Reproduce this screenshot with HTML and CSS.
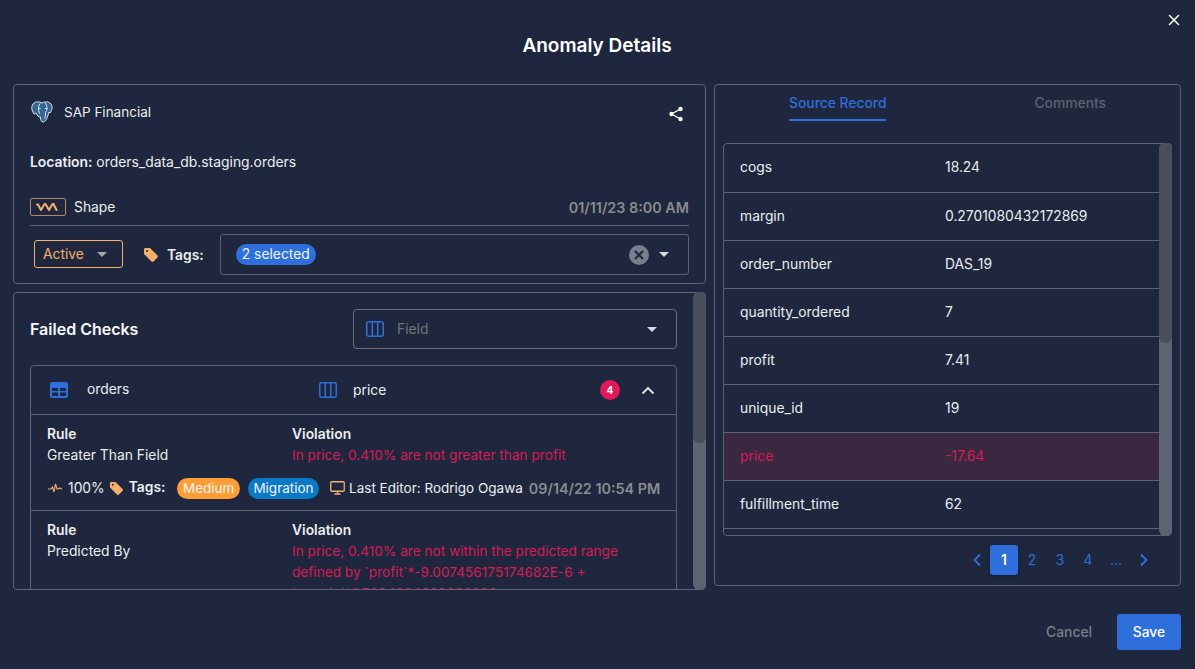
FILE: index.html
```html
<!DOCTYPE html>
<html lang="en">
<head>
    <meta charset="UTF-8">
    <meta name="viewport" content="width=device-width, initial-scale=1.0">
    <title>Anomaly Details</title>
    <link rel="stylesheet" href="styles.css">
</head>
<body>
    <div class="modal">
        <button class="close-btn" aria-label="Close">
            <svg width="12" height="12" viewBox="0 0 12 12"><path d="M1.5 1.5l9 9M10.5 1.5l-9 9" stroke="#fff" stroke-width="1.5" stroke-linecap="round"/></svg>
        </button>
        <h1 class="title">Anomaly Details</h1>

        <div class="columns">
            <div class="left-col">
                <section class="card summary">
                    <div class="source-row">
                        <div class="source">
                            <svg class="pg-logo" width="24" height="24" viewBox="0 0 24 24">
                                <path d="M3 4C6 1 9 1.500 12 3c3-1.500 6-2 9 1 2 3 1 6-1 9l-1-1c-1 3-2 9-5.500 10-2.500 0-3-2-3-5-2 .5-3.500-2-4.500-4l-2 1C1.500 10 1 7 3 4z" fill="#336791" stroke="#dfe6ee" stroke-width="1"/>
                                <path d="M10 3.500C8 6 8 10 9.500 13.500M15 3c2.500 2.500 2.500 7 .5 9.500 0 2 0 4-1 6M8 8.500h2.500M15 8.500h2.500" fill="none" stroke="#dfe6ee" stroke-width="1"/>
                            </svg>
                            <span>SAP Financial</span>
                        </div>
                        <svg class="share" width="16" height="16" viewBox="0 0 16 16">
                            <path d="M12.500 3L3.500 8l9 5" fill="none" stroke="#fff" stroke-width="1.300"/>
                            <circle cx="12.500" cy="3" r="2.200" fill="#fff"/><circle cx="3.500" cy="8" r="2.200" fill="#fff"/><circle cx="12.500" cy="13" r="2.200" fill="#fff"/>
                        </svg>
                    </div>
                    <p class="location"><b>Location:</b> orders_data_db.staging.orders</p>
                    <div class="shape-row">
                        <div class="shape">
                            <span class="shape-icon">
                                <svg width="26" height="10" viewBox="0 0 26 10"><path d="M2 2.500h1l3 5.500 3.500-6h1L14 8l3.500-6h1l3 6" fill="none" stroke="#f5b06b" stroke-width="2" stroke-linejoin="round" stroke-linecap="round"/></svg>
                            </span>
                            <span>Shape</span>
                        </div>
                        <span class="timestamp">01/11/23 8:00 AM</span>
                    </div>
                    <div class="status-row">
                        <div class="status-select">
                            <span>Active</span>
                            <i class="caret caret-grey"></i>
                        </div>
                        <svg class="tag-icon" width="16" height="16" viewBox="0 0 16 16"><path d="M1 2.500C1 1.700 1.700 1 2.500 1H7l7.500 7.500c.6.600.6 1.400 0 2l-4 4c-.6.600-1.400.600-2 0L1 7z" fill="#f5b06b"/><circle cx="4" cy="4" r="1" fill="#1e273d"/></svg>
                        <b class="tags-label">Tags:</b>
                        <div class="tags-select">
                            <span class="chip-selected">2 selected</span>
                            <div class="tags-actions">
                                <svg width="20" height="20" viewBox="0 0 20 20"><circle cx="10" cy="10" r="10" fill="#787e8d"/><path d="M6 6l8 8M14 6l-8 8" stroke="#1e273d" stroke-width="2"/></svg>
                                <i class="caret"></i>
                            </div>
                        </div>
                    </div>
                </section>

                <section class="card checks">
                    <div class="checks-scroll">
                        <div class="checks-head">
                            <h2>Failed Checks</h2>
                            <div class="field-select">
                                <svg width="18" height="16" viewBox="0 0 18 16"><rect x=".75" y=".75" width="16.500" height="14.500" rx="2" fill="none" stroke="#2f6fdb" stroke-width="1.500"/><path d="M6.300 1v14M11.700 1v14" stroke="#2f6fdb" stroke-width="1.500"/></svg>
                                <span>Field</span>
                                <i class="caret"></i>
                            </div>
                        </div>
                        <div class="check-group">
                            <div class="group-head">
                                <div class="group-table">
                                    <svg width="18" height="16" viewBox="0 0 18 16"><rect x="0" y="0" width="18" height="16" rx="2" fill="#2f6fdb"/><path d="M2 6h6v3H2zM10 6h6v3h-6zM2 10.500h6V14H2zM10 10.500h6V14h-6z" fill="#1e273d"/></svg>
                                    <span>orders</span>
                                </div>
                                <div class="group-field">
                                    <svg width="18" height="16" viewBox="0 0 18 16"><rect x=".75" y=".75" width="16.500" height="14.500" rx="2" fill="none" stroke="#2f6fdb" stroke-width="1.500"/><path d="M6.300 1v14M11.700 1v14" stroke="#2f6fdb" stroke-width="1.500"/></svg>
                                    <span>price</span>
                                </div>
                                <span class="count-badge">4</span>
                                <svg class="chevron" width="14" height="9" viewBox="0 0 14 9"><path d="M1.500 7.500L7 2l5.500 5.500" fill="none" stroke="#e4e6ea" stroke-width="1.800"/></svg>
                            </div>
                            <div class="rule">
                                <div class="rule-cols">
                                    <div class="rule-name"><b>Rule</b><span>Greater Than Field</span></div>
                                    <div class="rule-violation"><b>Violation</b><span class="danger">In price, 0.410% are not greater than profit</span></div>
                                </div>
                                <div class="rule-meta">
                                    <svg class="pulse" width="14" height="10" viewBox="0 0 14 10"><path d="M0 6h3l1.500-2L6 9l1.500-8L9 6h1.500l1-1L14 6" fill="none" stroke="#f5b06b" stroke-width="1.100"/></svg>
                                    <span class="pct">100%</span>
                                    <svg class="meta-tag" width="15" height="15" viewBox="0 0 16 16"><path d="M1 2.500C1 1.700 1.700 1 2.500 1H7l7.500 7.500c.6.600.6 1.400 0 2l-4 4c-.6.600-1.400.600-2 0L1 7z" fill="#f5b06b"/><circle cx="4" cy="4" r="1" fill="#1e273d"/></svg>
                                    <b class="meta-tags">Tags:</b>
                                    <span class="pill pill-orange">Medium</span>
                                    <span class="pill pill-blue">Migration</span>
                                    <svg class="monitor" width="15" height="14" viewBox="0 0 15 14"><rect x=".75" y=".75" width="13.500" height="9.500" rx="1" fill="none" stroke="#f5b06b" stroke-width="1.300"/><path d="M7.500 10.500v2M4.500 13h6" stroke="#f5b06b" stroke-width="1.300"/></svg>
                                    <span class="editor">Last Editor: Rodrigo Ogawa</span>
                                    <span class="timestamp">09/14/22 10:54 PM</span>
                                </div>
                            </div>
                            <div class="rule rule-last">
                                <div class="rule-cols">
                                    <div class="rule-name"><b>Rule</b><span>Predicted By</span></div>
                                    <div class="rule-violation"><b>Violation</b><span class="danger">In price, 0.410% are not within the predicted range defined by `profit`*-9.007456175174682E-6 + `margin`*1.5694984669632698</span></div>
                                </div>
                            </div>
                        </div>
                    </div>
                    <div class="scrollbar"><div class="scrollbar-thumb thumb-left"></div></div>
                </section>
            </div>

            <section class="card record">
                <div class="tabs">
                    <span class="tab tab-active">Source Record</span>
                    <span class="tab">Comments</span>
                </div>
                <div class="record-table">
                    <div class="record-row"><span class="key">cogs</span><span>18.24</span></div>
                    <div class="record-row"><span class="key">margin</span><span>0.2701080432172869</span></div>
                    <div class="record-row"><span class="key">order_number</span><span>DAS_19</span></div>
                    <div class="record-row"><span class="key">quantity_ordered</span><span>7</span></div>
                    <div class="record-row"><span class="key">profit</span><span>7.41</span></div>
                    <div class="record-row"><span class="key">unique_id</span><span>19</span></div>
                    <div class="record-row row-danger"><span class="key">price</span><span>-17.64</span></div>
                    <div class="record-row"><span class="key">fulfillment_time</span><span>62</span></div>
                    <div class="scrollbar"><div class="scrollbar-thumb thumb-right"></div></div>
                </div>
                <div class="pagination">
                    <svg width="10" height="14" viewBox="0 0 10 14"><path d="M8 1.500L2.500 7 8 12.500" fill="none" stroke="#2f6fdb" stroke-width="1.800"/></svg>
                    <span class="page page-active">1</span>
                    <span class="page">2</span>
                    <span class="page">3</span>
                    <span class="page">4</span>
                    <span class="page">...</span>
                    <svg width="10" height="14" viewBox="0 0 10 14"><path d="M2 1.500L7.500 7 2 12.500" fill="none" stroke="#2f6fdb" stroke-width="1.800"/></svg>
                </div>
            </section>
        </div>

        <div class="footer">
            <button class="btn-cancel">Cancel</button>
            <button class="btn-save">Save</button>
        </div>
    </div>
</body>
</html>
```

FILE: styles.css
```css
* {
    box-sizing: border-box;
}
body {
    margin: 0;
    background-color: #1e273d;
    color: #eceef1;
    font-family: Inter, "Liberation Sans", sans-serif;
    font-size: 13.85px;
    overflow: hidden;
}
.modal {
    position: relative;
    width: 1195px;
    height: 669px;
    padding: 0 14px 0 13px;
}
.close-btn {
    position: absolute;
    top: 14px;
    right: 15px;
    padding: 0;
    width: 12px;
    height: 12px;
    display: flex;
    background: none;
    border: none;
}
.title {
    margin: 0;
    padding-top: 34px;
    height: 84px;
    font-size: 19px;
    line-height: 24px;
    font-weight: 600;
    text-align: center;
    color: #fff;
}
.columns {
    display: flex;
    gap: 8px;
}
.left-col {
    width: 693px;
    display: flex;
    flex-direction: column;
    gap: 8px;
}
.card {
    border: 1px solid #5c6373;
    border-radius: 4px;
}
.caret {
    display: inline-block;
    width: 0;
    height: 0;
    border-left: 5px solid transparent;
    border-right: 5px solid transparent;
    border-top: 5px solid #d6d8dc;
}
.caret-grey {
    border-top-color: #a5a7aa;
}
svg {
    flex-shrink: 0;
}

/* summary card */
.summary {
    height: 200px;
    padding: 15px 16px 0;
}
.source-row {
    display: flex;
    justify-content: space-between;
    align-items: center;
    height: 24px;
}
.source {
    display: flex;
    align-items: center;
    gap: 10px;
}
.source span {
    font-size: 13.5px;
}
.share {
    margin: 3px 5px 0 0;
}
.location {
    margin: 28px 0 0;
    line-height: 20px;
    font-size: 13.9px;
}
.location b {
    font-weight: 600;
}
.shape-row {
    display: flex;
    justify-content: space-between;
    align-items: center;
    margin-top: 25px;
    height: 20px;
}
.shape {
    display: flex;
    align-items: center;
    gap: 8px;
}
.shape-icon {
    display: flex;
    align-items: center;
    justify-content: center;
    width: 36px;
    height: 18px;
    border: 1px solid #a98a6b;
    border-radius: 2px;
}
.timestamp {
    color: #8a8c90;
    font-size: 14.35px;
    font-weight: 600;
}
.status-row {
    display: flex;
    align-items: center;
    margin-top: 8px;
    padding-top: 8px;
    border-top: 1px solid #5c6373;
}
.status-select {
    display: flex;
    align-items: center;
    justify-content: space-between;
    width: 89px;
    height: 28px;
    margin: -1px 0 0 4px;
    padding: 0 15px 0 8px;
    border: 1px solid #f5b06b;
    border-radius: 3px;
    color: #f5b06b;
}
.tag-icon {
    margin-left: 20px;
}
.tags-label {
    margin-left: 8px;
    font-weight: 600;
}
.tags-select {
    display: flex;
    align-items: center;
    justify-content: space-between;
    flex: 1;
    height: 41px;
    margin-left: 16px;
    padding: 0 19px 0 15px;
    border: 1px solid #5c6373;
    border-radius: 3px;
}
.chip-selected {
    padding: 0 6px;
    height: 21px;
    line-height: 21px;
    border-radius: 11px;
    background-color: #2f6fdb;
    color: #eef3fc;
}
.tags-actions {
    display: flex;
    align-items: center;
    gap: 10px;
}

/* failed checks card */
.checks {
    position: relative;
    height: 298px;
}
.checks-scroll {
    width: 679px;
    height: 296px;
    padding: 16px 16px 0;
    overflow: hidden;
}
.checks-head {
    display: flex;
    justify-content: space-between;
    align-items: center;
    height: 40px;
}
.checks-head h2 {
    margin: 0;
    font-size: 16px;
    font-weight: 600;
    color: #f6f7f8;
}
.field-select {
    display: flex;
    align-items: center;
    width: 324px;
    height: 40px;
    padding: 0 19px 0 12px;
    border: 1px solid #6b6f78;
    border-radius: 4px;
    color: #70747d;
}
.field-select span {
    flex: 1;
    margin-left: 13px;
}
.check-group {
    margin-top: 16px;
    border: 1px solid #5c6373;
    border-radius: 4px;
}
.group-head {
    display: flex;
    align-items: center;
    height: 48px;
}
.group-table {
    display: flex;
    align-items: center;
    gap: 19px;
    width: 269px;
    margin-left: 19px;
}
.group-table span {
    margin-top: -3px;
}
.group-field {
    display: flex;
    align-items: center;
    gap: 16px;
    flex: 1;
}
.count-badge {
    width: 20px;
    height: 20px;
    margin-left: 1px;
    border-radius: 50%;
    background-color: #e3175a;
    color: #fff;
    font-size: 10px;
    font-weight: 700;
    line-height: 20px;
    text-align: center;
}
.chevron {
    margin: 0 21px 0 21px;
}
.rule {
    padding: 9px 16px 0;
    height: 96px;
    border-top: 1px solid #5c6373;
}
.rule-cols {
    display: flex;
}
.rule-name {
    width: 245px;
}
.rule-name, .rule-violation {
    display: flex;
    flex-direction: column;
    line-height: 21px;
}
.rule-name b, .rule-violation b {
    font-weight: 600;
}
.rule-violation {
    flex: 1;
}
.danger {
    color: #d81b56;
    font-size: 13.65px;
    max-width: 340px;
}
.rule-meta {
    display: flex;
    align-items: center;
    margin-top: 11px;
    height: 22px;
    white-space: nowrap;
}
.pulse {
    margin-left: 1px;
}
.pct {
    margin-left: 6px;
}
.meta-tag {
    margin-left: 4px;
}
.meta-tags {
    margin-left: 5px;
    margin-top: -3px;
    font-weight: 600;
}
.pill {
    height: 21px;
    line-height: 21px;
    padding: 0 5.5px;
    border-radius: 11px;
    font-size: 13.5px;
    color: #f3f5f8;
}
.pill-orange {
    margin-left: 12px;
    background-color: #ff9d35;
}
.pill-blue {
    margin-left: 8px;
    background-color: #0a7ac7;
}
.monitor {
    margin-left: 11px;
}
.editor {
    margin-left: 4px;
    font-size: 13.5px;
}
.rule-meta .timestamp {
    margin-left: 6px;
}
.rule-last {
    border-top: 1px solid #5c6373;
}

/* overlay scrollbars */
.scrollbar {
    position: absolute;
    top: -1px;
    right: -1px;
    bottom: -1px;
    width: 13px;
    background-color: #5c6373;
    border-radius: 6px;
}
.scrollbar-thumb {
    background-color: #4a4e5a;
    border-radius: 6px;
}
.thumb-left {
    height: 151px;
}
.thumb-right {
    height: 200px;
}

/* source record card */
.record {
    width: 467px;
    height: 502px;
    padding: 0 8px;
}
.tabs {
    display: flex;
    height: 58px;
    padding-top: 8px;
}
.tab {
    margin-left: 66px;
    height: 28px;
    line-height: 20px;
    font-weight: 500;
    color: #5f636d;
}
.tab:last-child {
    margin-left: 148px;
}
.tab-active {
    color: #2f6fdb;
    border-bottom: 2px solid #2f6fdb;
}
.record-table {
    position: relative;
    height: 393px;
    border: 1px solid #5c6373;
    border-radius: 4px;
}
.record-row {
    display: flex;
    align-items: center;
    height: 48px;
    padding: 0 0 1px 16px;
    border-bottom: 1px solid #5c6373;
}
.record-row:first-child {
    height: 49px;
    padding-bottom: 2px;
}
.key {
    width: 205px;
}
.row-danger {
    background-color: #3a2840;
    color: #d81b56;
}
.pagination {
    display: flex;
    align-items: center;
    justify-content: flex-end;
    height: 50px;
    padding: 0 23px 2px 0;
    color: #2f6fdb;
}
.page {
    width: 28px;
    height: 30px;
    line-height: 30px;
    text-align: center;
    border-radius: 3px;
}
.page-active {
    background-color: #2f6fdb;
    color: #fff;
    font-weight: 600;
    margin-left: 8px;
    box-shadow: 0 1px 3px rgba(0, 0, 0, 0.3);
}
.pagination svg:last-child {
    margin-left: 9px;
}

/* footer */
.footer {
    display: flex;
    justify-content: flex-end;
    align-items: center;
    gap: 25px;
    margin-top: 24px;
}
.btn-cancel, .btn-save {
    font-family: inherit;
    font-size: 13.85px;
    font-weight: 500;
    border: none;
    border-radius: 3px;
}
.btn-cancel {
    background: none;
    color: #7b7f88;
    padding: 0;
}
.btn-save {
    width: 64px;
    height: 36px;
    background-color: #2f6fdb;
    color: #fff;
}
```
